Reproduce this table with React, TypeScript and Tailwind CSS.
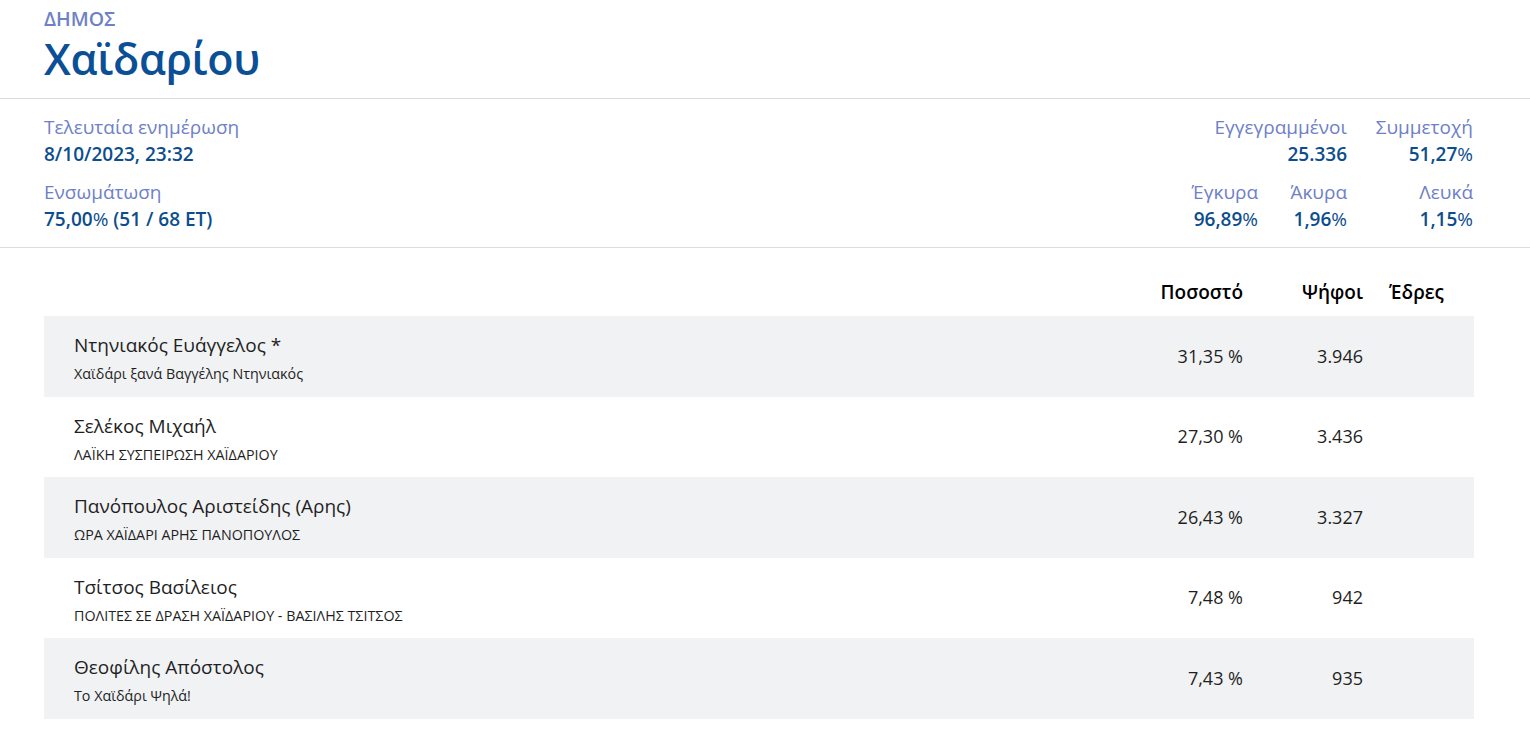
import React from "react";

const rows = [
  { name: "Ντηνιακός Ευάγγελος *", party: "Χαϊδάρι ξανά Βαγγέλης Ντηνιακός", pct: "31,35 %", votes: "3.946" },
  { name: "Σελέκος Μιχαήλ", party: "ΛΑΪΚΗ ΣΥΣΠΕΙΡΩΣΗ ΧΑΪΔΑΡΙΟΥ", pct: "27,30 %", votes: "3.436" },
  { name: "Πανόπουλος Αριστείδης (Αρης)", party: "ΩΡΑ ΧΑΪΔΑΡΙ ΑΡΗΣ ΠΑΝΟΠΟΥΛΟΣ", pct: "26,43 %", votes: "3.327" },
  { name: "Τσίτσος Βασίλειος", party: "ΠΟΛΙΤΕΣ ΣΕ ΔΡΑΣΗ ΧΑΪΔΑΡΙΟΥ - ΒΑΣΙΛΗΣ ΤΣΙΤΣΟΣ", pct: "7,48 %", votes: "942" },
  { name: "Θεοφίλης Απόστολος", party: "Το Χαϊδάρι Ψηλά!", pct: "7,43 %", votes: "935" },
];

function Stat({ label, value, pct, w, align = "left" }: { label: string; value: string; pct?: boolean; w?: string; align?: "left" | "right" }) {
  return (
    <div className={`${w ?? ""} flex flex-col ${align === "right" ? "items-end" : "items-start"} whitespace-nowrap`}>
      <div className="text-[19px] leading-[27px] text-[#6e80c8]">{label}</div>
      <div className="text-[19px] leading-[27px] font-semibold text-[#0c4d8e]">
        {value}
        {pct && <span className="font-normal">%</span>}
      </div>
    </div>
  );
}

export default function App() {
  return (
    <div className="bg-white min-h-[730px] text-[#1f1f1f]" style={{ fontFamily: '"Open Sans", "Noto Sans", sans-serif' }}>
      <div className="px-[44px] pt-[5px] h-[99px] border-b border-[#dcdcdc]">
        <div className="text-[19.5px] leading-[27px] font-semibold text-[#6e80c8]">ΔΗΜΟΣ</div>
        <div className="text-[43px] leading-[54px] font-semibold text-[#0b4f96] tracking-[-0.3px]">Χαϊδαρίου</div>
      </div>

      <div className="h-[149px] border-b border-[#dcdcdc] pl-[44px] pr-[57px] pt-[15px] flex justify-between">
        <div className="flex flex-col gap-[11px]">
          <Stat label="Τελευταία ενημέρωση" value="8/10/2023, 23:32" />
          <div>
            <div className="text-[19px] leading-[27px] text-[#6e80c8]">Ενσωμάτωση</div>
            <div className="text-[19px] leading-[27px] font-semibold text-[#0c4d8e]">
              75,00<span className="font-normal">%</span> (51 / 68 ET)
            </div>
          </div>
        </div>
        <div className="flex flex-col gap-[11px] items-end">
          <div className="flex">
            <Stat label="Εγγεγραμμένοι" value="25.336" align="right" />
            <Stat label="Συμμετοχή" value="51,27" pct align="right" w="w-[126px]" />
          </div>
          <div className="flex">
            <Stat label="Έγκυρα" value="96,89" pct align="right" />
            <Stat label="Άκυρα" value="1,96" pct align="right" w="w-[89px]" />
            <Stat label="Λευκά" value="1,15" pct align="right" w="w-[126px]" />
          </div>
        </div>
      </div>

      <div className="ml-[44px] w-[1430px] pt-[30px]">
        <div className="flex h-[38px] items-start text-[19px] leading-[28px] font-semibold text-black">
          <div className="flex-1" />
          <div className="w-[120px] text-right">Ποσοστό</div>
          <div className="w-[120px] text-right">Ψήφοι</div>
          <div className="w-[111px] pr-[4px] text-center">Έδρες</div>
        </div>
        {rows.map((r, i) => (
          <div key={i} className={`flex h-[80.5px] ${i % 2 === 0 ? "bg-[#f1f2f4]" : "bg-white"}`}>
            <div className="flex-1 pl-[30px] pt-[15px]">
              <div className="text-[19px] leading-[28px] text-[#1f1f1f]">{r.name}</div>
              <div className="mt-[4px] text-[14.3px] leading-[22px] text-[#1f1f1f]">{r.party}</div>
            </div>
            <div className="w-[120px] self-center text-right text-[18px]">{r.pct}</div>
            <div className="w-[120px] self-center text-right text-[18px]">{r.votes}</div>
            <div className="w-[111px]" />
          </div>
        ))}
      </div>
    </div>
  );
}
